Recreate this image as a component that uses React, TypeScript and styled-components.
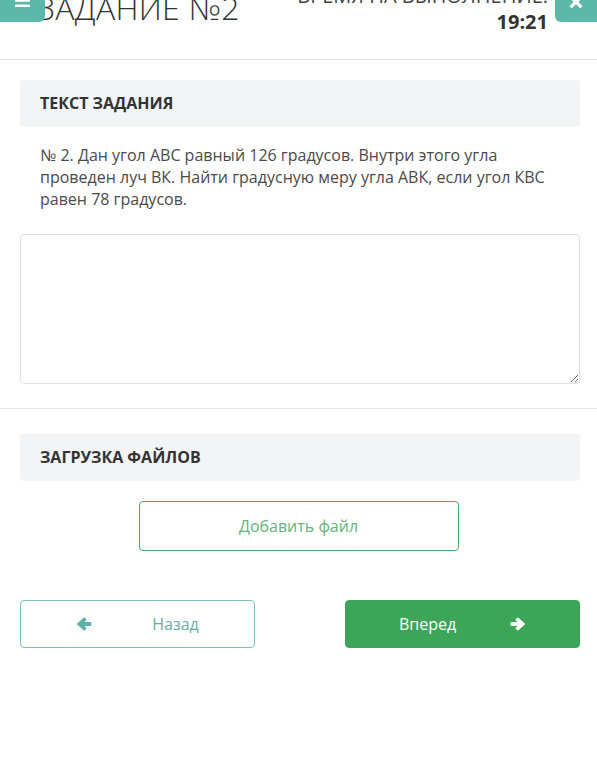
import React from "react";
import styled, { createGlobalStyle } from "styled-components";
import { FaBars, FaTimes } from "react-icons/fa";

const GlobalStyle = createGlobalStyle`
  html, body { margin: 0; padding: 0; background: #fff; }
  body { font-family: "Open Sans", "Noto Sans", sans-serif; color: #444; overflow: hidden; }
  * { box-sizing: border-box; }
`;

const Page = styled.div`
  width: 597px;
  height: 757px;
  overflow: hidden;
  position: relative;
`;

const Header = styled.header`
  position: relative;
  margin-top: -30px;
  height: 90px;
  border-bottom: 1px solid #e6e6e6;
  display: flex;
  justify-content: space-between;
  align-items: flex-start;
`;

const CornerButton = styled.button<{ $side: "left" | "right" }>`
  position: absolute;
  top: 0;
  ${(p) => (p.$side === "left" ? "left: 0;" : "right: 0;")}
  width: ${(p) => (p.$side === "left" ? "45px" : "42px")};
  height: 52px;
  border: none;
  background: #5cb8a9;
  color: #fff;
  border-radius: ${(p) => (p.$side === "left" ? "0 0 6px 0" : "0 0 0 6px")};
  display: flex;
  align-items: flex-end;
  justify-content: center;
  padding: 0 0 ${(p) => (p.$side === "left" ? "13px" : "11px")};
  font-size: ${(p) => (p.$side === "left" ? "17px" : "18px")};
  z-index: 2;
`;

const Title = styled.h1`
  margin: 21.6px 0 0 37px;
  font-size: 32px;
  line-height: 32px;
  font-weight: 300;
  color: #333;
  letter-spacing: 0.3px;
`;

const Timer = styled.div`
  margin: 12.7px 49px 0 0;
  text-align: right;
  font-size: 20px;
  line-height: 26px;
  color: #444;
`;

const TimerValue = styled.div`
  font-weight: 700;
  color: #333;
`;

const Section = styled.section<{ $pt: number; $pb: number; $border?: boolean }>`
  padding: ${(p) => p.$pt}px 17px ${(p) => p.$pb}px 20px;
  border-bottom: ${(p) => (p.$border ? "1px solid #e6e6e6" : "none")};
`;

const SectionTitle = styled.div`
  background: #f2f4f6;
  border-radius: 4px;
  padding: 12px 20px;
  font-size: 16px;
  line-height: 23px;
  font-weight: 700;
  color: #333;
`;

const TaskText = styled.p`
  margin: 17px 0 0;
  padding: 0 24px 0 20px;
  font-size: 16px;
  line-height: 22px;
  color: #4a4a4a;
`;

const Answer = styled.textarea`
  display: block;
  margin-top: 24px;
  width: 100%;
  height: 150px;
  border: 1px solid #e0e0e0;
  border-radius: 4px;
  resize: vertical;
  font-family: inherit;
  font-size: 16px;
  outline: none;
`;

const Center = styled.div`
  display: flex;
  justify-content: center;
  margin-top: 20px;
  padding-right: 3px;
`;

const AddButton = styled.button`
  width: 320px;
  height: 50px;
  background: #fff;
  border: 1px solid #4aab66;
  border-radius: 4px;
  color: #64b47b;
  font-family: inherit;
  font-size: 16px;
`;

const Nav = styled.div`
  display: flex;
  justify-content: space-between;
  margin-top: 49px;
`;

const NavButton = styled.button<{ $primary?: boolean }>`
  width: 235px;
  height: 48px;
  border-radius: 4px;
  border: 1px solid ${(p) => (p.$primary ? "#3ca558" : "#7cbfb6")};
  background: ${(p) => (p.$primary ? "#3ca558" : "#fff")};
  color: ${(p) => (p.$primary ? "#fff" : "#6aaaa6")};
  font-family: inherit;
  font-size: 16px;
  display: flex;
  align-items: center;
  justify-content: center;
  gap: ${(p) => (p.$primary ? "54px" : "60px")};
  padding: 0;
`;

const ArrowIcon = styled.svg<{ $primary?: boolean }>`
  width: 16px;
  height: 14px;
  fill: ${(p) => (p.$primary ? "#fff" : "#5cb0a6")};
`;

function Arrow({ dir, primary }: { dir: "left" | "right"; primary?: boolean }) {
  return (
    <ArrowIcon $primary={primary} viewBox="0 0 15 13" aria-hidden="true">
      <path
        d="M0.6 6.5 L6.8 0.8 Q7.7 0.1 8.6 0.9 L9.4 1.7 Q10.1 2.6 9.3 3.4 L7.6 4.6 H13.2 Q14.5 4.6 14.5 5.9 V7.1 Q14.5 8.4 13.2 8.4 H7.6 L9.3 9.6 Q10.1 10.4 9.4 11.3 L8.6 12.1 Q7.7 12.9 6.8 12.2 Z"
        transform={dir === "right" ? "translate(15 0) scale(-1 1)" : undefined}
      />
    </ArrowIcon>
  );
}

export default function App() {
  return (
    <Page>
      <GlobalStyle />
      <Header>
        <CornerButton $side="left" aria-label="menu">
          <FaBars />
        </CornerButton>
        <Title>ЗАДАНИЕ №2</Title>
        <Timer>
          <div>ВРЕМЯ НА ВЫПОЛНЕНИЕ:</div>
          <TimerValue>19:21</TimerValue>
        </Timer>
        <CornerButton $side="right" aria-label="close">
          <FaTimes />
        </CornerButton>
      </Header>
      <Section $pt={20} $pb={24} $border>
        <SectionTitle>ТЕКСТ ЗАДАНИЯ</SectionTitle>
        <TaskText>
          № 2. Дан угол АВС равный 126 градусов. Внутри этого угла проведен луч ВК. Найти
          градусную меру угла АВК, если угол КВС равен 78 градусов.
        </TaskText>
        <Answer />
      </Section>
      <Section $pt={25} $pb={0}>
        <SectionTitle>ЗАГРУЗКА ФАЙЛОВ</SectionTitle>
        <Center>
          <AddButton>Добавить файл</AddButton>
        </Center>
        <Nav>
          <NavButton>
            <Arrow dir="left" />
            Назад
          </NavButton>
          <NavButton $primary>
            Вперед
            <Arrow dir="right" primary />
          </NavButton>
        </Nav>
      </Section>
    </Page>
  );
}
